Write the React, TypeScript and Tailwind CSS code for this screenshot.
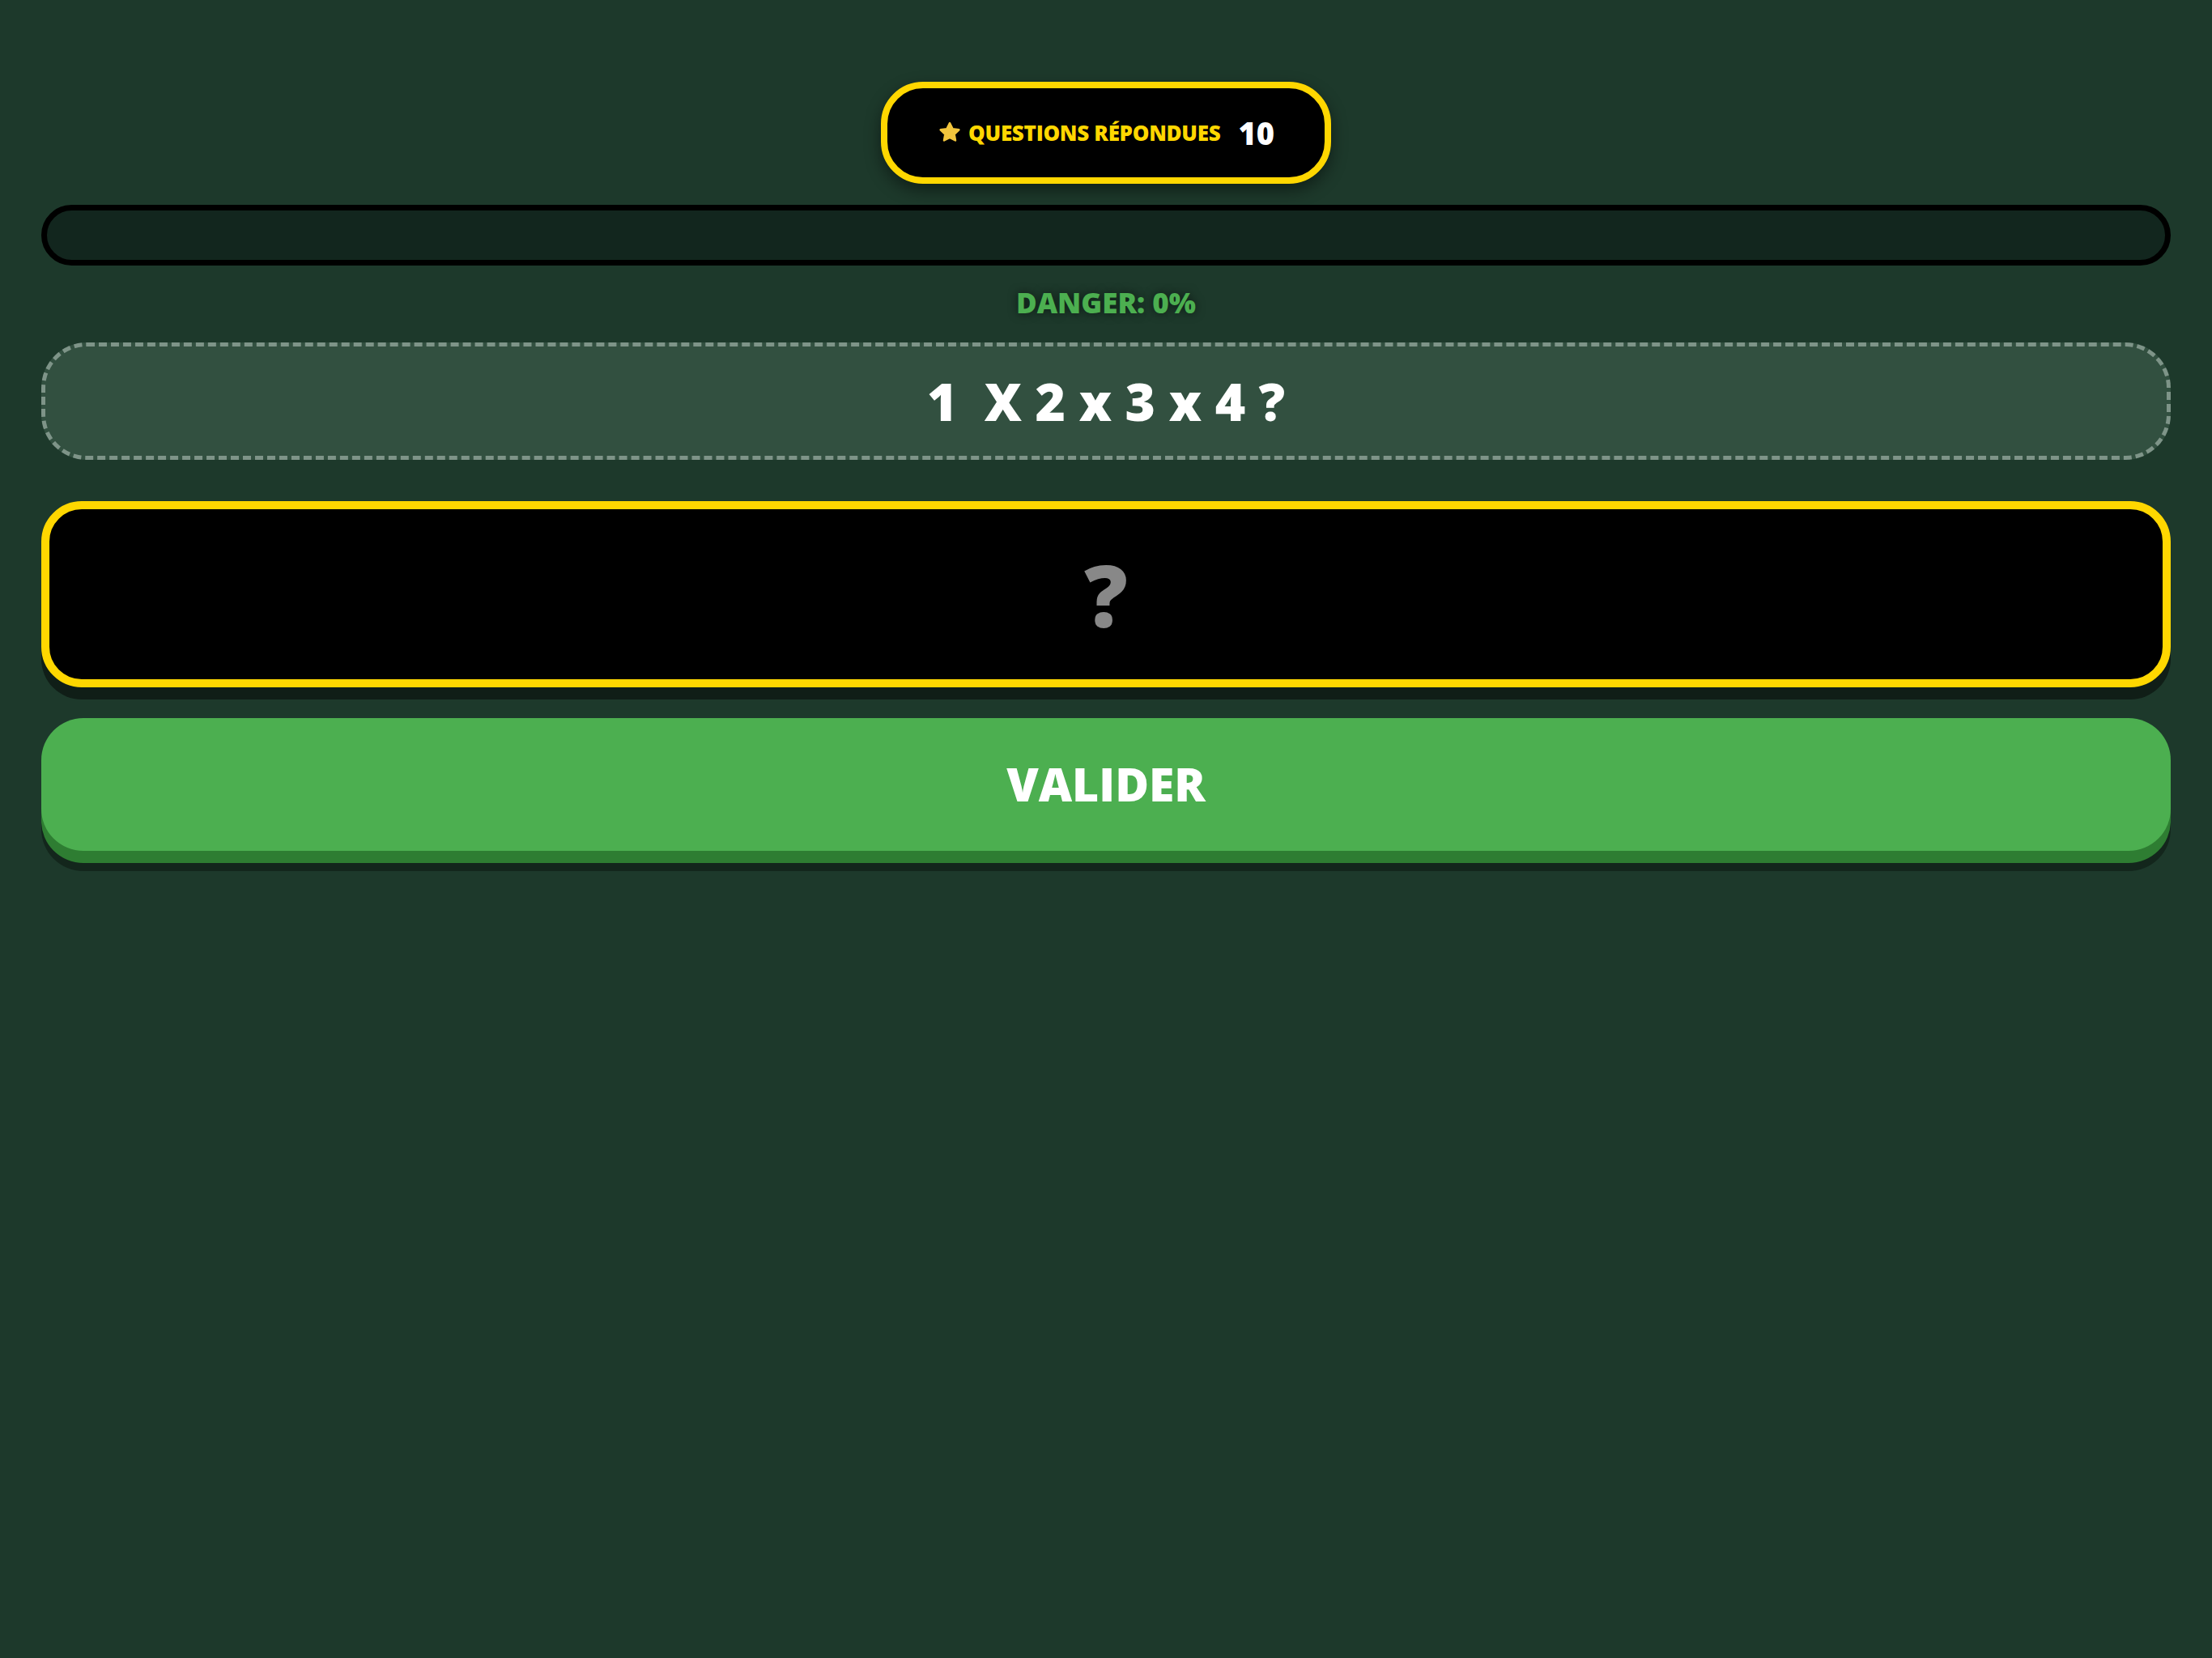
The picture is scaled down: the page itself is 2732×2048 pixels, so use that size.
import React from "react";

function Star() {
  return (
    <svg width="30" height="30" viewBox="0 0 24 24" className="shrink-0">
      <path
        d="M12 2.4l2.8 5.7 6.3.9-4.6 4.4 1.1 6.2L12 16.7l-5.6 2.9 1.1-6.2-4.6-4.4 6.3-.9z"
        fill="#f2c53d"
        stroke="#f2c53d"
        strokeWidth="2"
        strokeLinejoin="round"
      />
    </svg>
  );
}

export default function App() {
  return (
    <main
      className="min-h-screen w-full bg-[#1d392b] px-[51px] pt-[101px]"
      style={{ fontFamily: '"Open Sans", "Noto Sans", sans-serif' }}
    >
      {/* Score badge */}
      <div className="flex justify-center">
        <div className="flex h-[126px] w-[556px] items-center justify-center gap-[22px] rounded-[52px] border-[8px] border-[#ffd700] bg-black shadow-[0_8px_20px_rgba(0,0,0,0.45)]">
          <div className="flex items-center gap-[8px]">
            <Star />
            <span className="text-[26px] font-extrabold tracking-[-0.3px] text-[#ffd700]">
              QUESTIONS RÉPONDUES
            </span>
          </div>
          <span className="text-[38px] font-extrabold text-white">10</span>
        </div>
      </div>

      {/* Danger bar */}
      <div className="mt-[26px] h-[75px] w-full rounded-full border-[7px] border-black bg-[#12261e]" />

      <p className="mt-[27px] text-center text-[35px] leading-[38px] font-extrabold text-[#4caf50] [text-shadow:0_0_12px_rgba(0,0,0,0.55)]">
        DANGER: 0%
      </p>

      {/* Question */}
      <div className="mt-[30px] flex h-[145px] items-center justify-center rounded-[56px] border-[5px] border-dashed border-[#7e9488] bg-[#325040]">
        <span className="whitespace-pre text-[64px] font-extrabold text-white">
          1  X 2 x 3 x 4 ?
        </span>
      </div>

      {/* Answer input */}
      <div className="mt-[51px] flex h-[230px] items-center justify-center rounded-[50px] border-[10px] border-[#ffd700] bg-black shadow-[0_15px_0_#101e17]">
        <input
          placeholder="?"
          className="w-full bg-transparent text-center text-[106px] font-extrabold text-white outline-none placeholder:text-[#888888]"
        />
      </div>

      {/* Submit */}
      <button className="mt-[38px] flex h-[164px] w-full items-center justify-center rounded-[52px] bg-[#4caf50] shadow-[0_15px_0_#2e7d32,0_25px_0_#13261c]">
        <span className="text-[57px] font-extrabold text-white">VALIDER</span>
      </button>
    </main>
  );
}
